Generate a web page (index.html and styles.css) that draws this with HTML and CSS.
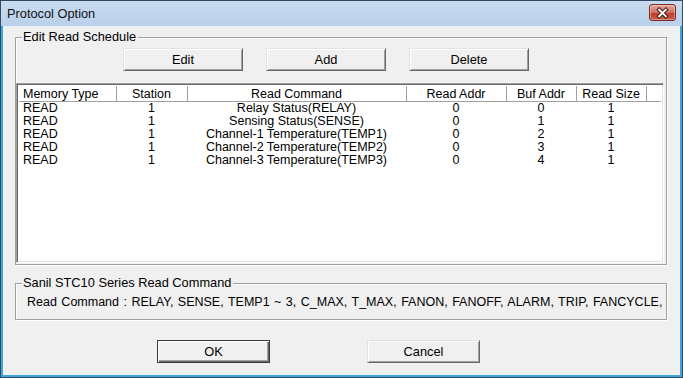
FILE: index.html
```html
<!DOCTYPE html>
<html lang="en">
<head>
<meta charset="UTF-8">
<meta name="viewport" content="width=device-width, initial-scale=1.0">
<title>Protocol Option</title>
<link rel="stylesheet" href="styles.css">
</head>
<body>

<div class="window">
  <div class="titlebar">
    <span class="title">Protocol Option</span>
    <button class="close-btn" title="Close">
      <svg width="26" height="16" viewBox="0 0 26 16">
        <path d="M9.5 4.5 L16.5 11.5 M16.5 4.5 L9.5 11.5" stroke="#3a1612" stroke-width="4" stroke-linecap="square" fill="none"/>
        <path d="M9.5 4.5 L16.5 11.5 M16.5 4.5 L9.5 11.5" stroke="#fff" stroke-width="2" stroke-linecap="square" fill="none"/>
      </svg>
    </button>
  </div>

  <div class="client">
    <div class="group schedule">
      <span class="group-label">Edit Read Schedule</span>
      <div class="btn-row">
        <button class="btn">Edit</button>
        <button class="btn">Add</button>
        <button class="btn">Delete</button>
      </div>

      <div class="list">
        <table class="grid">
          <colgroup>
            <col style="width:97px">
            <col style="width:71px">
            <col style="width:219px">
            <col style="width:100px">
            <col style="width:70px">
            <col style="width:70px">
            <col>
          </colgroup>
          <thead>
            <tr>
              <th class="left">Memory Type</th>
              <th>Station</th>
              <th>Read Command</th>
              <th>Read Addr</th>
              <th>Buf Addr</th>
              <th>Read Size</th>
              <th class="filler"></th>
            </tr>
          </thead>
          <tbody>
            <tr><td class="left">READ</td><td>1</td><td>Relay Status(RELAY)</td><td>0</td><td>0</td><td>1</td><td></td></tr>
            <tr><td class="left">READ</td><td>1</td><td>Sensing Status(SENSE)</td><td>0</td><td>1</td><td>1</td><td></td></tr>
            <tr><td class="left">READ</td><td>1</td><td>Channel-1 Temperature(TEMP1)</td><td>0</td><td>2</td><td>1</td><td></td></tr>
            <tr><td class="left">READ</td><td>1</td><td>Channel-2 Temperature(TEMP2)</td><td>0</td><td>3</td><td>1</td><td></td></tr>
            <tr><td class="left">READ</td><td>1</td><td>Channel-3 Temperature(TEMP3)</td><td>0</td><td>4</td><td>1</td><td></td></tr>
          </tbody>
        </table>
      </div>
    </div>

    <div class="group commands">
      <span class="group-label">Sanil STC10 Series Read Command</span>
      <p class="cmd-text">Read Command : RELAY, SENSE, TEMP1 ~ 3, C_MAX, T_MAX, FANON, FANOFF, ALARM, TRIP, FANCYCLE,</p>
    </div>

    <div class="footer">
      <button class="btn default">OK</button>
      <button class="btn">Cancel</button>
    </div>
  </div>
</div>

</body>
</html>
```

FILE: styles.css
```css
body {
  margin: 0;
  background-color: #f0f0f0;
  font-family: "Liberation Sans", Arial, sans-serif;
  font-size: 12.8px;
  color: #000;
}

/* dialog frame */
.window {
  width: 683px;
  height: 378px;
  box-sizing: border-box;
  border: 1px solid #2f4a63;
  background-color: #3fa6dc;
  display: flex;
  flex-direction: column;
  overflow: hidden;
}
.titlebar {
  height: 25px;
  flex-shrink: 0;
  background: linear-gradient(#c9dbf0, #b9d0ea);
  display: flex;
  align-items: center;
  justify-content: space-between;
  padding: 0 6px 0 6px;
}
.title {
  color: #111;
  margin-top: -1px;
}
.close-btn {
  width: 27px;
  height: 17px;
  padding: 0;
  margin-top: -2px;
  border: 1px solid #7a2b22;
  border-radius: 3px;
  background: linear-gradient(#e2a79c, #cf6d5f 50%, #bd3d2f 51%, #c9594b);
  box-shadow: inset 0 0 0 1px rgba(255, 255, 255, 0.35);
  display: flex;
  align-items: center;
  justify-content: center;
}
.close-btn svg {
  display: block;
}

.client {
  flex: 1;
  margin: 0 2px 2px;
  background-color: #f0f0f0;
  padding-top: 11px;
}

/* etched group boxes */
.group {
  position: relative;
  margin-left: 12px;
  width: 652px;
  box-sizing: border-box;
  border: 1px solid #a0a0a0;
  box-shadow: inset 1px 1px #fff, 1px 1px #fff;
}
.group-label {
  position: absolute;
  top: -8px;
  left: 6px;
  padding: 0 2px 0 1px;
  background-color: #f0f0f0;
  line-height: 14px;
}
.schedule {
  height: 228px;
  padding: 10px 2px 0 0;
}
.commands {
  height: 37px;
  margin-top: 18px;
}
.cmd-text {
  margin: 0;
  padding: 11px 0 0 11px;
  font-size: 12.5px;
  word-spacing: 1px;
  line-height: 14px;
  white-space: nowrap;
}

/* push buttons */
.btn {
  font-family: inherit;
  font-size: 12.8px;
  color: #000;
  background-color: #f0f0f0;
  height: 23px;
  padding: 0;
  border: 1px solid;
  border-color: #e3e3e3 #696969 #696969 #e3e3e3;
  box-shadow: inset 1px 1px #fff, inset -1px -1px #a0a0a0;
}
.btn-row {
  display: flex;
  gap: 23px;
  padding-left: 107px;
}
.btn-row .btn {
  width: 120px;
}
.footer {
  display: flex;
  gap: 97px;
  margin-top: 20px;
  padding-left: 154px;
}
.footer .btn {
  width: 113px;
}
.btn.default {
  border-color: #3a3a3a;
  box-shadow: inset 1px 1px #fff, inset -1px -1px #696969, inset -2px -2px #a0a0a0;
}

/* report list */
.list {
  margin-top: 12px;
  height: 180px;
  box-sizing: border-box;
  background-color: #fff;
  border: 1px solid;
  border-color: #a0a0a0 #fff #fff #a0a0a0;
  box-shadow: inset 1px 1px #696969, inset -1px -1px #e3e3e3;
  padding: 2px 2px 0 2px;
}
.grid {
  width: 100%;
  border-collapse: collapse;
  table-layout: fixed;
  font-size: 12.5px;
}
.grid th {
  font-weight: normal;
  height: 15px;
  padding: 0;
  line-height: 14px;
  background-color: #fff;
  border-right: 1px solid #a0a0a0;
  border-bottom: 1px solid #a0a0a0;
  white-space: nowrap;
}
.grid th.filler {
  border-right: none;
}
.grid td {
  padding: 0;
  height: 13px;
  line-height: 13px;
  text-align: center;
  white-space: nowrap;
  overflow: hidden;
}
.grid .left {
  text-align: left;
  padding-left: 4px;
}
```
